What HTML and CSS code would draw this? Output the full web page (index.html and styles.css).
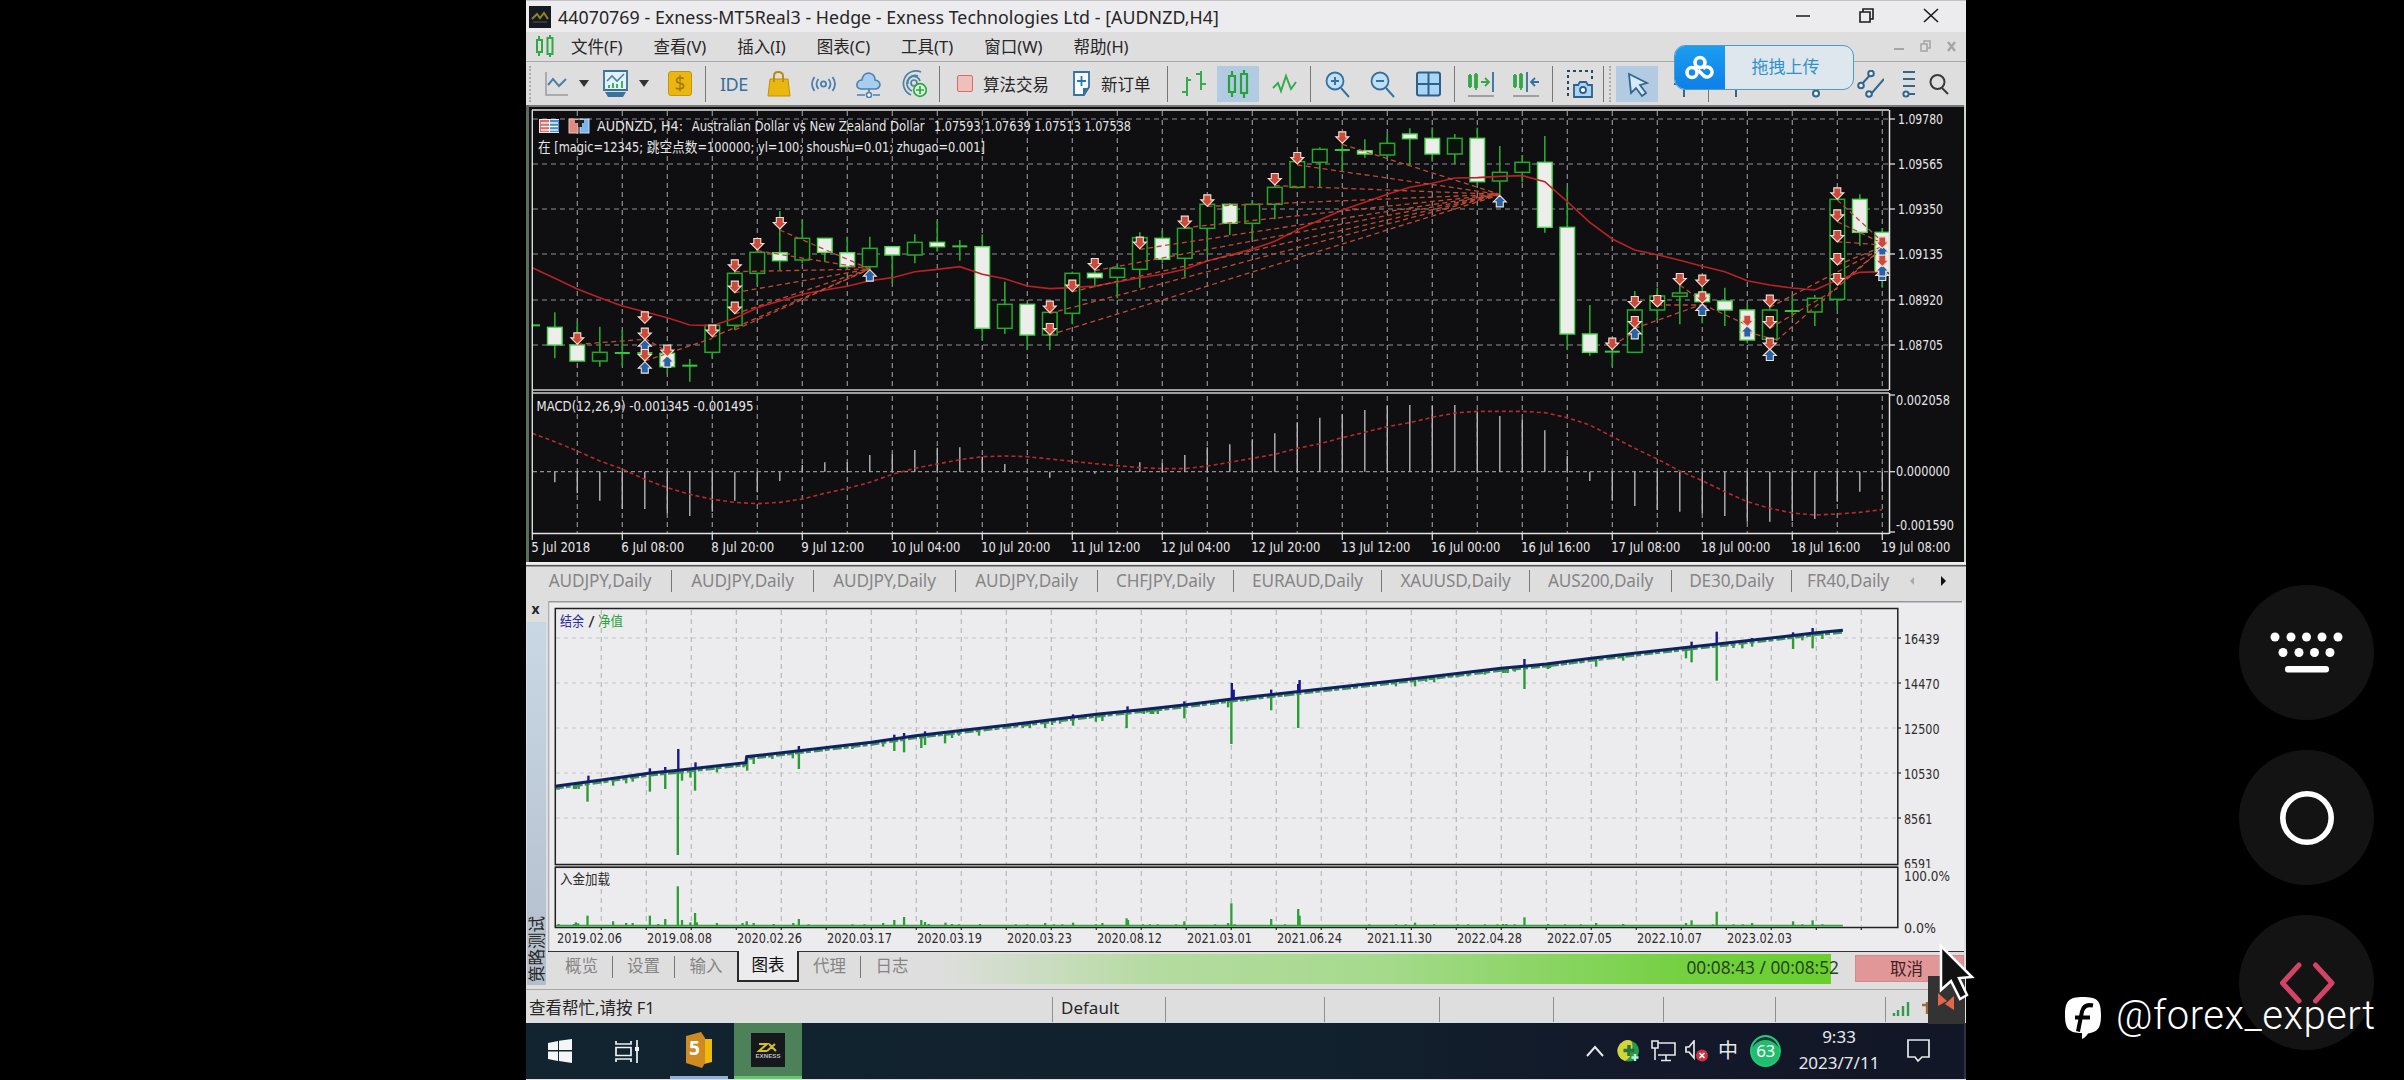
FILE: index.html
```html
<!DOCTYPE html>
<html lang="zh-CN">
<head>
    <meta charset="UTF-8">
    <meta name="viewport" content="width=device-width, initial-scale=1.0">
    <title>44070769 - Exness-MT5Real3</title>
    <link rel="stylesheet" href="styles.css">
</head>
<body>
    <div class="desktop">
        <div class="titlebar">
            <svg class="app-icon" width="22" height="22" viewBox="0 0 22 22"><rect width="22" height="22" fill="#151a22"/><path d="M3 13l5-5 3 4 4-5 4 6" fill="none" stroke="#8d8426" stroke-width="2"/><path d="M4 16h14" stroke="#555" stroke-width="1"/></svg>
            <span class="title">44070769 - Exness-MT5Real3 - Hedge - Exness Technologies Ltd - [AUDNZD,H4]</span>
            <svg class="win-btns" width="150" height="22" viewBox="1792 5 150 22" fill="none" stroke="#1c1c1c" stroke-width="1.6"><path d="M1796 15h14M1924 8l14 13M1938 8l-14 13"/><path d="M1860 11h10v10h-10zM1863 11v-3h10v10h-3"/></svg>
        </div>
        <div class="menubar">
            <svg width="20" height="24" viewBox="0 0 20 24" fill="none" stroke="#2fa845" stroke-width="2"><path d="M4 2v4M4 18v4M2 6h5v12h-5zM15 1v3M15 20v3M12.500 4h5v16h-5z"/></svg>
            <span class="m1">文件(F)</span><span>查看(V)</span><span>插入(I)</span><span>图表(C)</span><span>工具(T)</span><span>窗口(W)</span><span>帮助(H)</span>
            <svg class="mdi" width="66" height="16" viewBox="1892 38 66 16" fill="none" stroke="#a5a5a5" stroke-width="2"><path d="M1894 49h10"/><path d="M1921 44h6v7h-6zM1924 44v-3h6v7h-3" stroke-width="1.600"/><path d="M1948 42l7 9M1955 42l-7 9" stroke-width="2.400"/></svg>
        </div>
        <div class="toolbar">
            <i class="handle"></i>
            <svg viewBox="0 0 28 28"><path d="M4 2v23h22" fill="none" stroke="#9a9a9a" stroke-width="1.500"/><path d="M6 15l5-6 6 7 7-7" fill="none" stroke="#4c80a8" stroke-width="2"/></svg>
            <i class="caret"></i>
            <svg viewBox="0 0 28 28"><path d="M4 1h23v19H4z" fill="#e3f1fa" stroke="#37719c" stroke-width="1.800"/><path d="M5 22h21l-3 5H8z" fill="#37719c"/><path d="M7 11l5-5 5 5 7-7" fill="none" stroke="#4c80a8" stroke-width="1.600"/><path d="M9 18v-3M13 18v-5M17 18v-4M22 18v-7" stroke="#38a84a" stroke-width="1.800"/></svg>
            <i class="caret"></i>
            <div class="coin">$</div>
            <i class="sep"></i>
            <span class="ide">IDE</span>
            <svg viewBox="0 0 28 28"><path d="M5 9h18l2 17H3z" fill="#eab710" stroke="#c1900a" stroke-width="1"/><path d="M9 12V6q0-4 4-4 5 0 5 4v6" fill="none" stroke="#b98c12" stroke-width="2"/></svg>
            <svg viewBox="0 0 28 28" fill="none" stroke="#4a7fae" stroke-width="1.800"><circle cx="15.500" cy="14" r="2.600"/><path d="M10.500 9q-4 5 0 10M20.500 9q4 5 0 10M6.500 7q-5 7 0 14M24.500 7q5 7 0 14"/></svg>
            <svg viewBox="0 0 28 28" stroke="#4a83b3" stroke-width="1.600"><path d="M8 19Q3 18 4 14q1-4 5-4 1-7 7-7 6 1 6 7 5 1 5 5-1 4-5 4z" fill="#a9cdee"/><path d="M16 19v4M4 25h8M20 25h7" /><circle cx="16" cy="25" r="2.500" fill="#fff"/></svg>
            <svg viewBox="0 0 28 28" fill="none" stroke="#4a83a3" stroke-width="1.700"><circle cx="15" cy="13" r="3"/><path d="M19 6a8 8 0 1 0-6 15M22 2a12 12 0 1 0-10 23M9 14a6 6 0 0 1 12-3"/><circle cx="21" cy="20" r="6.300" fill="#d8f4d8" stroke="#31a547"/><path d="M21 16v8M17 20h8" stroke="#31a547"/></svg>
            <i class="sep"></i>
            <i class="stop"></i>
            <span class="tool-text">算法交易</span>
            <svg viewBox="0 0 28 28"><path d="M4 2h11l4 0v15l-5 8H4z" fill="#f4fafd" stroke="#37719c" stroke-width="1.800"/><path d="M19 18l-6 8v-8z" fill="#37719c"/><path d="M7 11h9M11.500 6v10" stroke="#2978ad" stroke-width="1.800"/></svg>
            <span class="tool-text">新订单</span>
            <i class="sep"></i>
            <svg viewBox="0 0 28 28" fill="none" stroke="#37aa4c" stroke-width="2"><path d="M7 7v19M2 22h5M7 10h4M21 1v19M16 4h5M21 14h5"/></svg>
            <div class="active"><svg viewBox="0 0 28 28" fill="none" stroke="#26a23c" stroke-width="2.200"><path d="M8 1v5M8 22v5M5 6h6v16H5zM20 0v4M20 23v5M17 4h6v19h-6z"/></svg></div>
            <svg viewBox="0 0 28 28" fill="none" stroke="#37aa4c" stroke-width="2"><path d="M2 18l5-5 3 8 5-15 5 13 5-7"/></svg>
            <i class="sep"></i>
            <svg viewBox="0 0 28 28"><circle cx="11" cy="11" r="8.500" fill="#bfe0f6" stroke="#33719f" stroke-width="1.800"/><path d="M17 18l8 9M7 11h8M11 7v8" stroke="#33719f" stroke-width="1.900"/></svg>
            <svg viewBox="0 0 28 28"><circle cx="11" cy="11" r="8.500" fill="#bfe0f6" stroke="#33719f" stroke-width="1.800"/><path d="M17 18l8 9M7 11h8" stroke="#33719f" stroke-width="1.900"/></svg>
            <svg viewBox="0 0 28 28"><rect x="3" y="2.500" width="23" height="23" rx="2" fill="#a9d4f3" stroke="#2d608b" stroke-width="2"/><path d="M14.500 3v22M3 14h23" stroke="#2d608b" stroke-width="2"/></svg>
            <i class="sep"></i>
            <svg viewBox="0 0 28 28" fill="none" stroke="#34a548" stroke-width="1.800"><path d="M4 4v14M3 6h2v10H3zM10 3v17M9 5h2v12H9zM15 12h8M19 8l4 4-4 4"/><path d="M27 2v20" stroke="#33719f"/><path d="M2 26h26" stroke="#999"/></svg>
            <svg viewBox="0 0 28 28" fill="none" stroke="#34a548" stroke-width="1.800"><path d="M4 4v14M3 6h2v10H3zM10 3v17M9 5h2v12H9z"/><path d="M16 2v20M28 12h-8M24 8l-4 4 4 4" stroke="#33719f"/><path d="M2 26h26" stroke="#999"/></svg>
            <i class="sep"></i>
            <svg viewBox="0 0 28 28"><path d="M3 26V1h24v11" fill="none" stroke="#1f4a68" stroke-width="2" stroke-dasharray="3 3"/><path d="M9 15h4l2-3h6l2 3h4v12H9z" fill="#a9d4f3" stroke="#2d608b" stroke-width="1.800"/><circle cx="18" cy="20" r="3" fill="#fff" stroke="#2d608b" stroke-width="1.800"/></svg>
            <i class="sep"></i>
            <i class="handle"></i>
            <div class="active"><svg viewBox="0 0 28 28"><path d="M6 4l2 19 5-5 6 8 4-3-6-8 7-2z" fill="#d6eafa" stroke="#33668f" stroke-width="1.800"/></svg></div>
            <svg viewBox="0 0 28 28" stroke="#33668f" stroke-width="2"><path d="M12 2v25M2 14h22"/></svg>
            <i class="sep"></i>
            <svg viewBox="0 0 28 28" stroke="#33668f" stroke-width="2"><path d="M14 2v25"/></svg>
            <svg viewBox="0 0 28 28" fill="#e8f3fb" stroke="#33668f" stroke-width="2"><path d="M14 22L26 5"/><circle cx="14" cy="23.500" r="3"/></svg>
            <svg viewBox="0 0 28 28" fill="#e8f3fb" stroke="#33668f" stroke-width="2"><path d="M5 15L15 4M15 24L28 9"/><circle cx="5" cy="15.500" r="2.800"/><circle cx="15" cy="3.500" r="2.800"/><circle cx="13" cy="24" r="2.800"/></svg>
            <svg viewBox="0 0 28 28" fill="#e8f3fb" stroke="#33668f" stroke-width="2"><path d="M3 2h12M3 9h12M3 16h12M3 24h12"/><circle cx="6" cy="24" r="2.600"/></svg>
            <svg viewBox="0 0 28 28" fill="none" stroke="#3a3a3a" stroke-width="2"><circle cx="9.500" cy="12" r="7"/><path d="M14 18l6 6"/></svg>
        </div>

        <svg id="market" class="market" viewBox="526 105 1440 457"></svg>

        <div class="chart-tabs">
            <span>AUDJPY,Daily</span><span>AUDJPY,Daily</span><span>AUDJPY,Daily</span><span>AUDJPY,Daily</span><span>CHFJPY,Daily</span><span>EURAUD,Daily</span><span>XAUUSD,Daily</span><span>AUS200,Daily</span><span>DE30,Daily</span><span>FR40,Daily</span>
            <svg class="tab-arrows" width="60" height="12" viewBox="0 0 60 12"><path d="M10 2v8L6 6z" fill="#aaa"/><path d="M37 1v10l5-5z" fill="#111"/></svg>
        </div>

        <div class="tester">
            <div class="side">
                <b>x</b>
                <div class="side-title"><span>策略测试</span></div>
            </div>
            <div class="panel">
                <svg id="balance" class="balance" viewBox="548 602 1416 350"></svg>
                <div class="tester-tabs">
                    <span>概览</span><span>设置</span><span class="nosep">输入</span><span class="on">图表</span><span>代理</span><span class="nosep">日志</span>
                    <div class="progress"><div class="bar"></div><span>00:08:43 / 00:08:52</span></div>
                    <button class="cancel">取消</button>
                </div>
            </div>
        </div>

        <div class="status">
            <span>查看帮忙,请按 F1</span><span>Default</span><span></span><span></span><span></span><span></span><span></span><span></span>
            <svg width="40" height="18" viewBox="0 0 40 18" stroke="#2f9c4b" stroke-width="2.400"><path d="M4 16v-3M8 16V10M13 16V6M18 16V2"/><path d="M32 5h6M37 2v12" stroke="#9b6b3c"/></svg>
        </div>

        <div class="taskbar">
            <svg class="start" width="24" height="24" viewBox="0 0 24 24" fill="#f4f6f8"><path d="M0 4l10-2v9H0zM11 1.800L24 0v11H11zM0 12.500h10V22L0 20zM11 12.500h13V24l-13-2z"/></svg>
            <svg class="view" width="26" height="24" viewBox="0 0 26 24" fill="none" stroke="#f0f2f4" stroke-width="1.700"><path d="M1 2v3h15V2M1 8.500h15v8H1zM1 23v-3h15v3M22 1v23"/><path d="M20 10h4" stroke-width="4"/></svg>
            <div class="app mt"><svg width="28" height="36" viewBox="0 0 28 36"><path d="M11 7h16v23l-12 3z" fill="#f0b90f"/><path d="M1 4l15-4 4 6v25l-3 5L1 31z" fill="#cd8b22"/><text x="4" y="23" class="five">5</text></svg></div>
            <div class="app ex"><svg width="34" height="34" viewBox="0 0 34 34"><rect width="34" height="34" fill="#16191c"/><path d="M8 11h8l-8 7h8M16 18l8-7M18 11l7 7" fill="none" stroke="#d4bc2f" stroke-width="2"/><text x="4.500" y="25" textLength="25" lengthAdjust="spacingAndGlyphs" class="exn">EXNESS</text></svg></div>
            <div class="tray">
                <svg width="18" height="12" viewBox="0 0 18 12" fill="none" stroke="#e6e8ea" stroke-width="2"><path d="M1 11l8-9 8 9"/></svg>
                <svg class="t2" width="24" height="24" viewBox="0 0 24 24"><circle cx="11.500" cy="12" r="10.500" fill="#2a9a4c"/><path d="M14 1.500A10.500 10.500 0 1 0 8 22q7-4 6-10 3-5 0-10.500z" fill="#d2d43a"/><path d="M12 6v11M6.500 11.500h11" stroke="#25753a" stroke-width="3.500"/><path d="M18 15v7M14.500 18.500h7" stroke="#b9f1dd" stroke-width="2.500"/></svg>
                <svg class="t3" width="25" height="22" viewBox="0 0 25 22" fill="none" stroke="#e6e8ea" stroke-width="1.600"><path d="M7 3h17v12H7M15 15v5M10 20.500h10M1 1h6v7H1zM4 8v12"/></svg>
                <svg class="t4" width="24" height="22" viewBox="0 0 24 22"><path d="M1 7h3l5-6v17l-5-6H1z" fill="none" stroke="#e6e8ea" stroke-width="1.700"/><circle cx="17" cy="15.500" r="6" fill="#cc3340"/><path d="M14.500 13l5 5M19.500 13l-5 5" stroke="#fff" stroke-width="1.700"/></svg>
                <span class="ime">中</span>
                <span class="badge">63</span>
                <div class="clock"><div>9:33</div><div>2023/7/11</div></div>
                <svg class="note" width="24" height="24" viewBox="0 0 24 24" fill="none" stroke="#e6e8ea" stroke-width="1.700"><path d="M1 1h21v17h-7l-4 4-3-4H1z"/></svg>
            </div>
        </div>

        <!-- 悬浮元素 -->
        <div class="upload">
            <div class="cloud"><svg width="32" height="26" viewBox="0 0 32 26" fill="none" stroke="#fff" stroke-width="3.600"><circle cx="16" cy="7.500" r="5"/><circle cx="8" cy="17.500" r="5"/><path d="M19 14a5 5 0 1 1 1 7l-6-6"/></svg></div>
            <span>拖拽上传</span>
        </div>
        <div class="popup"><svg width="18" height="20" viewBox="0 0 18 20" fill="#e0684b"><path d="M1 2l9 8-9 5zM17 5v14l-9-6z"/></svg></div>
        <svg class="pointer" width="38" height="58" viewBox="0 0 38 58"><path d="M2 3v44l10-9 9 18 7-4-8-17 13-1z" fill="#111" stroke="#fff" stroke-width="2.500"/></svg>
    </div>

    <div class="float-btns">
        <div class="round"><svg width="74" height="44" viewBox="0 0 74 44" fill="#fff"><circle cx="5" cy="6" r="4.500"/><circle cx="21" cy="6" r="4.500"/><circle cx="36.500" cy="6" r="4.500"/><circle cx="52" cy="6" r="4.500"/><circle cx="68" cy="6" r="4.500"/><circle cx="13" cy="21.500" r="4.500"/><circle cx="29" cy="21.500" r="4.500"/><circle cx="44.500" cy="21.500" r="4.500"/><circle cx="60" cy="21.500" r="4.500"/><rect x="15" y="35" width="44" height="6.500" rx="3"/></svg></div>
        <div class="round"><svg width="56" height="56" viewBox="0 0 56 56"><circle cx="28" cy="28" r="24.200" fill="none" stroke="#fff" stroke-width="5.600"/></svg></div>
        <div class="round"><svg width="56" height="44" viewBox="0 0 56 44" fill="none" stroke="#d24466" stroke-width="5" stroke-linecap="round" stroke-linejoin="round"><path d="M20 4L3.500 22 20 40M36.500 4L53 22 36.500 40"/></svg></div>
    </div>

    <div class="watermark">
        <svg width="38" height="44" viewBox="0 0 38 44"><path d="M19 1C33 1 37 4 37 19c0 13-3 17-13 18.500-2 3-3 4-6 5.500v-6C5 37 1 33 1 19 1 5 5 1 19 1z" fill="#fff"/><path d="M29 9.500q-9-2-11 6l-4 20M11 21.500h15" fill="none" stroke="#000" stroke-width="4"/></svg>
        <span>@forex_expert</span>
    </div>

    <script src="script.js"></script>
</body>
</html>
```

FILE: styles.css
```css
*{margin: 0;padding: 0;box-sizing: border-box;}
body{
    width: 2404px;
    height: 1080px;
    overflow: hidden;
    background: #000;
    display: flex;
    position: relative;
    font-family: "Noto Sans","Noto Sans CJK SC",sans-serif;
}
svg{display: block;flex: none;}
.desktop{
    width: 1440px;
    height: 1080px;
    margin-left: 526px;
    background: #dfdedf;
    display: flex;
    flex-direction: column;
    position: relative;
    color: #262626;
}
.titlebar{
    height: 32px;
    background: #ecebed;
    border-top: 1px solid #c3c2c4;
    display: flex;
    align-items: center;
    padding-left: 3px;
}
.title{font-size: 17.8px;margin-left: 7px;white-space: nowrap;letter-spacing: 0.05px;}
.win-btns{margin-left: auto;margin-right: 24px;}
.menubar{
    height: 30px;
    border-bottom: 1px solid #a9a8aa;
    display: flex;
    align-items: center;
    gap: 31px;
    padding: 0 0 2px 9px;
    font-size: 16.5px;
}
.menubar .m1{margin-left: -15px;}
.mdi{margin-left: auto;margin-right: 8px;}

/* 工具栏 */
.toolbar{
    height: 43px;
    display: grid;
    align-items: center;
    grid-template-columns: 16px 34px 24px 36px 29px 39px 12px 49px 43px 45px 46px 39px 17px 28px 87px 31px 65px 14px 37px 54px 38px 15px 45px 45px 39px 13px 45px 40px 14px 37px 4px 10px 56px 35px 15px 80px 54px 44px 28px 38px;
}
.toolbar svg{width: 28px;height: 28px;}
.handle{width: 0;height: 36px;margin-left: 3px;border-left: 2px dotted #aaa;}
.sep{width: 1px;height: 36px;background: #777;margin-left: 1px;}
.caret{margin-left: 3px;border: 5px solid transparent;border-top: 7px solid #333;border-bottom: 0;width: 10px;}
.coin{
    width: 24px;height: 25px;margin-left: 3px;
    background: #eab710;border: 1px solid #c49410;border-radius: 3px;
    color: #a4780b;font-size: 19px;line-height: 22px;text-align: center;
}
.ide{font-size: 18px;color: #356f9d;margin-left: 4px;letter-spacing: -0.5px;}
.stop{width: 16px;height: 17px;margin-left: 2px;background: #efc0ba;border: 1.5px solid #d56d66;border-radius: 2px;}
.tool-text{font-size: 16.5px;white-space: nowrap;}
.active{width: 42px;height: 36px;background: #b2cbe2;display: flex;align-items: center;justify-content: center;}

.market{width: 1440px;height: 457px;background: #0f0f12;}
.market text{fill: #e6e6e6;font-family: "DejaVu Sans Condensed","DejaVu Sans","Noto Sans CJK SC",sans-serif;font-size: 13.5px;}

/* 图表标签 */
.chart-tabs{
    height: 38px;
    padding: 4px 0 7px 3px;
    border-top: 2px solid #efefef;
    background: linear-gradient(#555,#555) 0 1px/100% 1.5px no-repeat,#dfdedf;
    display: grid;
    grid-template-columns: 143px 142px 142px 142px 136px 148px 148px 142px 120px 112px 60px;
    align-items: center;
    font-size: 17.2px;
    color: #868686;
    letter-spacing: -0.15px;
}
.chart-tabs span{border-right: 1px solid #777;text-align: center;height: 22px;line-height: 21px;}
.chart-tabs span:nth-child(10){border: 0;}

/* 策略测试 */
.tester{height: 390px;display: flex;border-bottom: 1px solid #a8a8a8;}
.side{width: 22px;display: flex;flex-direction: column;}
.side b{height: 22px;text-align: center;font-size: 14px;line-height: 17px;width: 19px;}
.side-title{
    width: 19px;
    margin-left: 1px;
    height: 363px;
    background: linear-gradient(#c9d7e5,#b3becb);
    display: flex;
    align-items: flex-end;
    padding-bottom: 3px;
}
.side-title span{writing-mode: vertical-rl;transform: rotate(180deg);font-size: 16.5px;line-height: 19px;text-orientation: sideways;white-space: nowrap;}
.panel{flex: 1;padding-top: 1px;}
.balance{width: 1416px;height: 350px;background: #ecebed;}
.balance text{font-family: "DejaVu Sans Condensed","DejaVu Sans","Noto Sans CJK SC",sans-serif;font-size: 13.5px;fill: #2c2c2c;}
.tester-tabs{
    height: 34px;
    display: flex;
    font-size: 16.5px;
    color: #858585;
    border-top: 1px solid #333;
    padding-left: 3px;
    width: 1416px;
}
.tester-tabs > span{width: 62px;height: 22px;margin-top: 4px;line-height: 20px;text-align: center;border-right: 1px solid #777;}
.tester-tabs > .nosep{border: 0;}
.tester-tabs > .on{
    width: 62px;
    height: 31px;
    margin-top: -1px;
    line-height: 28px;
    background: #ecebed;
    border: 2px solid #2b2b2b;
    border-top: 0;
    color: #111;
}
.progress{
    width: 912px;
    height: 30px;
    margin: 2px 0 0 11px;
    display: flex;
    align-items: center;
    justify-content: flex-end;
    position: relative;
    font-size: 17.3px;
    color: #28451e;
}
.progress .bar{position: absolute;left: 0;top: 0;width: 897px;height: 30px;background: linear-gradient(90deg,#dfdedf,#b4dba0 25%,#a5da8c 50%,#72d03e 85%,#68cf2d);}
.progress span{position: relative;margin: -3px 7px 0 0;white-space: nowrap;}
.cancel{
    width: 109px;
    height: 27px;
    margin: 3px 0 0 9px;
    border: 1px solid #ce8a8c;
    background: #e19698;
    font: inherit;
    color: #3c2222;
    text-align: left;
    padding-left: 34px;
    line-height: 24px;
}

.status{
    height: 33px;
    display: grid;
    grid-template-columns: 527px 113px 159px 115px 114px 110px 112px 110px 1fr;
    align-items: center;
    font-size: 16.5px;
    padding-top: 5px;
}
.status span{height: 25px;line-height: 22px;border-right: 1px solid #8f8f8f;padding-left: 3px;white-space: nowrap;}
.status span:nth-child(2){padding-left: 8px;font-size: 17px;}
.status svg{margin-left: 4px;}

/* 任务栏 */
.taskbar{
    height: 56px;
    background: linear-gradient(90deg,#11242f,#11212d 55%,#13182a 80%,#121727);
    display: flex;
    align-items: center;
    border-right: 2px solid #2b3446;
}
.start{margin-left: 22px;}
.view{margin-left: 43px;}
.app{height: 56px;display: flex;align-items: center;justify-content: center;}
.mt{width: 58px;margin-left: 29px;border-bottom: 3px solid #8ab2dc;}
.ex{width: 68px;margin-left: 6px;background: #4c815a;border-bottom: 3px solid #5bcb68;}
.five{font: bold 19px "Noto Sans",sans-serif;fill: #fff;}
.exn{font: bold 6px "Liberation Sans",sans-serif;fill: #bbb;}
.tray{margin-left: auto;display: flex;align-items: center;color: #e6e8ea;}
.t2{margin-left: 13px;}
.t3{margin-left: 10px;}
.t4{margin-left: 9px;}
.ime{font-size: 20px;margin-left: 9px;line-height: 24px;}
.badge{
    width: 31px;
    height: 32px;
    border-radius: 50%;
    margin-left: 12px;
    background: #1fbd6c;
    border: 2px solid #23c877;
    box-shadow: inset 0 5px 0 -2px #15353a;
    color: #fff;
    font-size: 17px;
    line-height: 28px;
    text-align: center;
    letter-spacing: -0.5px;
}
.clock{width: 100px;margin-left: 8px;text-align: center;font-size: 17px;line-height: 26px;padding-bottom: 2px;}
.note{margin-left: 18px;margin-right: 33px;}

.upload{
    position: absolute;
    left: 1148px;
    top: 45px;
    width: 180px;
    height: 45px;
    border: 1.5px solid #4a9ccd;
    border-radius: 11px;
    background: #dfe7ee;
    display: flex;
    overflow: hidden;
    color: #2f92cb;
    font-size: 17px;
}
.cloud{width: 50px;background: linear-gradient(#1c9ef0,#0d7fe9);display: flex;align-items: center;justify-content: center;}
.upload span{flex: 1;text-align: center;line-height: 41px;padding-right: 7px;}
.popup{position: absolute;left: 1402px;top: 976px;width: 37px;height: 48px;background: #333;padding: 15px 0 0 9px;}
.pointer{position: absolute;left: 1413px;top: 943px;}

.float-btns{margin-left: 273px;padding-top: 585px;display: flex;flex-direction: column;gap: 30px;}
.round{width: 135px;height: 135px;border-radius: 50%;background: #131313;display: flex;align-items: center;justify-content: center;flex: none;}
.watermark{
    position: absolute;
    left: 2064px;
    top: 990px;
    height: 56px;
    display: flex;
    align-items: center;
    gap: 14px;
    color: #fff;
    font: 300 40px/50px "Roboto",sans-serif;
    letter-spacing: 0.5px;
}
.watermark span{margin-top: -4px;}
```

FILE: script.js
```js
const market = document.querySelector('#market')
const balance = document.querySelector('#balance')

const line = (x1, y1, x2, y2, color, w = 1.3, dash = '') =>
    `<line x1="${x1}" y1="${y1}" x2="${x2}" y2="${y2}" stroke="${color}" stroke-width="${w}" stroke-dasharray="${dash}"/>`
const rect = (x, y, w, h, fill, stroke = 'none', sw = 1.5) =>
    `<rect x="${x}" y="${y}" width="${w}" height="${h}" fill="${fill}" stroke="${stroke}" stroke-width="${sw}"/>`
const text = (x, y, len, s, extra = '') =>
    `<text x="${x}" y="${y}" textLength="${len}" lengthAdjust="spacingAndGlyphs" ${extra}>${s}</text>`

const cx = i => 532.3 + 22.5 * i
const py = v => 105 + v / 3
const my = v => 385 + v / 3

// 每根K线: 类型(w实心 h空心 d十字), 高, 实体上, 实体下, 低
const candles = [
    'd 659 661 661 664', 'w 622 667 720 760', 'w 650 720 768 768', 'h 665 742 768 785', 'd 675 744 744 782',
    'd 700 744 744 770', 'w 735 745 785 805', 'd 762 782 782 830', 'h 661 661 742 760', 'h 495 505 661 675',
    'h 430 442 505 540', 'w 318 443 467 495', 'h 345 400 465 475', 'w 400 400 442 470', 'w 395 443 485 490',
    'h 395 430 485 500', 'w 425 425 450 535', 'h 388 412 450 475', 'w 348 412 425 440', 'd 405 424 424 467',
    'w 388 425 670 705', 'h 530 598 670 687', 'w 598 598 690 735', 'h 615 622 690 735', 'h 500 505 625 658',
    'w 490 505 518 547', 'h 475 490 517 580', 'h 382 398 493 548', 'w 378 400 463 475', 'h 365 370 460 515',
    'h 295 298 370 450', 'w 295 298 355 390', 'h 285 298 355 403', 'h 240 247 298 343', 'h 165 170 247 250',
    'h 127 133 172 247', 'd 110 135 135 200', 'w 103 137 147 158', 'h 87 115 150 160', 'w 70 87 101 180',
    'w 67 100 147 170', 'h 87 100 147 177', 'w 68 100 230 240', 'h 123 202 228 270', 'h 150 172 202 232',
    'w 93 172 367 383', 'w 247 367 687 735', 'w 600 687 742 752', 'd 700 740 740 783', 'h 558 615 742 742',
    'h 548 573 615 645', 'h 535 564 574 658', 'w 530 567 590 655', 'w 548 588 615 663', 'w 598 615 705 715',
    'h 600 615 703 740', 'd 570 618 618 637', 'h 570 580 621 663', 'h 245 283 583 615', 'w 268 283 382 422', 'w 370 382 500 548'
]
const ma = [488, 520, 552, 578, 603, 620, 638, 660, 662, 640, 608, 588, 568, 555, 544, 527, 518, 500, 493, 485, 508, 521, 543, 551, 548, 543, 531, 518, 508, 493, 468, 450, 432, 409, 375, 345, 315, 292, 268, 247, 235, 219, 218, 214, 212, 230, 290, 352, 402, 435, 449, 466, 484, 500, 527, 540, 549, 555, 525, 502, 500]
const sells = [[2, 700], [5, 637], [5, 686], [5, 750], [6, 737], [8, 677], [9, 481], [9, 545], [9, 608], [10, 417], [11, 354], [23, 605], [23, 672], [24, 542], [25, 477], [27, 413], [29, 350], [30, 286], [33, 222], [34, 159], [36, 97], [48, 716], [49, 591], [49, 651], [50, 588], [51, 522], [52, 527], [52, 577], [54, 647], [55, 587], [55, 651], [55, 716], [58, 265], [58, 331], [58, 393], [58, 462], [58, 522], [60, 412], [60, 467]]
const buys = [[5, 722], [5, 788], [6, 770], [15, 512], [43, 289], [49, 685], [52, 615], [54, 680], [55, 750], [60, 440], [60, 510], [60, 497]]
const deals = [
    [2, 718, 5, 703], [5, 700, 6, 740], [5, 768, 8, 700], [8, 697, 15, 492], [9, 500, 15, 492], [9, 563, 15, 492], [9, 627, 15, 492], [9, 675, 15, 492], [10, 437, 15, 492], [11, 375, 15, 492],
    [23, 625, 43, 268], [23, 690, 43, 270], [24, 560, 43, 268], [25, 497, 43, 268], [27, 433, 43, 268], [29, 368, 43, 268], [30, 304, 43, 268], [33, 242, 43, 268], [34, 180, 43, 268], [36, 118, 43, 268],
    [48, 722, 49, 680], [49, 670, 52, 598], [50, 600, 52, 600], [51, 540, 52, 590], [52, 598, 54, 660], [54, 680, 55, 700], [55, 607, 60, 430], [55, 670, 58, 550], [55, 724, 60, 430],
    [58, 285, 60, 410], [58, 350, 60, 415], [58, 410, 60, 420], [58, 480, 60, 425], [58, 542, 60, 430]
]
const hist = [260, 292, 325, 347, 372, 372, 385, 393, 380, 347, 322, 288, 240, 232, 232, 210, 208, 195, 188, 187, 215, 237, 260, 278, 260, 266, 255, 232, 235, 210, 187, 178, 163, 145, 112, 98, 88, 75, 62, 60, 62, 60, 78, 93, 103, 136, 213, 288, 347, 363, 375, 380, 385, 393, 410, 410, 408, 402, 350, 320, 320]
const signal = [145, 170, 198, 228, 252, 283, 308, 328, 343, 352, 356, 352, 342, 325, 310, 292, 268, 250, 237, 224, 215, 213, 215, 222, 229, 236, 242, 248, 251, 251, 243, 232, 220, 208, 190, 176, 158, 142, 125, 113, 97, 84, 79, 79, 79, 83, 98, 120, 155, 190, 222, 258, 287, 320, 350, 370, 384, 390, 387, 382, 374]

function arrow(x, y, up) {
    let d = up ? 'M0-6L6.500.5H3.500V5.500H-3.500V.5H-6.500z' : 'M0 6L6.500-.5H3.500V-5.500H-3.500V-.5H-6.500z'
    return `<path transform="translate(${x} ${y})" d="${d}" fill="${up ? '#2463a8' : '#cb4a3a'}" stroke="#f3dfd8" stroke-width="1.100"/>`
}

function drawMarket() {
    let s = rect(526, 105, 1440, 2, '#777') + rect(526, 105, 3, 457, '#5d6b5f') + rect(1964, 105, 2, 457, '#c4d9c5')
    // 网格
    for (let i = 2; i <= 60; i += 2) {
        s += line(cx(i), 111, cx(i), 389, '#8f8f94', 1.2, '5 4')
        s += line(cx(i), 396, cx(i), 533, '#8f8f94', 1.2, '5 4')
    }
    const prices = [[119, '1.09780'], [164, '1.09565'], [209, '1.09350'], [254, '1.09135'], [300, '1.08920'], [345, '1.08705']]
    prices.forEach(([y, p]) => {
        s += line(533, y, 1889, y, '#8f8f94', 1.2, '5 4') + line(1889, y, 1895, y, '#ddd')
        s += text(1898, y + 4.7, 45, p)
    })
    s += line(533, 471.7, 1889, 471.7, '#8f8f94', 1.2, '4 3')
    candles.forEach((c, i) => {
        let [t, ...v] = c.split(' ')
        let [h, a, b, l] = v.map(n => py(+n))
        let x = cx(i), g = '#27a82d'
        if (t === 'h') s += line(x, h, x, a, g, 1.6) + line(x, b, x, l, g, 1.6) + rect(x - 7.3, a, 14.6, b - a, '#0a120c', g)
        else s += line(x, h, x, l, g, 1.6)
        if (t === 'w') s += rect(x - 7.3, a, 14.6, b - a, '#ededeb', '#50d954', 1.4)
        if (t === 'd') s += rect(Math.max(x - 7.500, 532), a - 1, x < 540 ? 8 : 15, 2, '#36c53c')
    })
    const path = (arr, f) => arr.map((v, i) => `${cx(i)},${f(v)}`).join(' ')
    s += `<polyline points="${path(ma, py)}" fill="none" stroke="#b92124" stroke-width="1.600"/>`
    deals.forEach(d => { s += line(cx(d[0]), py(d[1]), cx(d[2]), py(d[3]), '#bf4a32', 1.3, '5 3.5') })
    buys.forEach(a => { s += arrow(cx(a[0]), py(a[1]), true) })
    sells.forEach(a => { s += arrow(cx(a[0]), py(a[1]), false) })
    // 右侧最后一根被边框截断
    s += rect(1890, 225, 8, 65, '#0f0f12')
    s += line(1889, 254, 1895, 254, '#ddd')
    hist.forEach((v, i) => { if (v !== 260) s += line(cx(i), 471.7, cx(i), my(v), '#b5b5b8', 1.4) })
    s += `<polyline points="${path(signal, my)}" fill="none" stroke="#b82a2a" stroke-width="1.600" stroke-dasharray="4 3"/>`
    // 边框
    s += line(532, 110, 1889, 110, '#e2e2e2', 1.5) + line(532.3, 110, 532.3, 534, '#d6ddd6', 1.4) + line(532, 390, 1889, 390, '#cfcfcf', 1.5)
    s += line(532, 393, 1889, 393, '#cfcfcf', 1.5) + line(532, 533.5, 1889, 533.5, '#e2e2e2', 1.5) + line(1889.5, 110, 1889.5, 390, '#e2e2e2', 1.5) + line(1889.5, 393, 1889.5, 534, '#e2e2e2', 1.5)
    s += line(1889, 395, 1895, 395, '#ddd') + line(1889, 471.7, 1895, 471.7, '#ddd') + line(1889, 532, 1895, 532, '#ddd')
    s += text(1896, 404.5, 54, '0.002058') + text(1896, 475.5, 54, '0.000000') + text(1896, 530, 58, '-0.001590')
    const dates = ['5 Jul 2018', '6 Jul 08:00', '8 Jul 20:00', '9 Jul 12:00', '10 Jul 04:00', '10 Jul 20:00', '11 Jul 12:00', '12 Jul 04:00', '12 Jul 20:00', '13 Jul 12:00', '16 Jul 00:00', '16 Jul 16:00', '17 Jul 08:00', '18 Jul 00:00', '18 Jul 16:00', '19 Jul 08:00']
    dates.forEach((d, i) => {
        s += line(cx(i * 4), 534, cx(i * 4), 540, '#ddd')
        s += text(cx(i * 4) - 1, 551.5, i === 0 ? 59 : d.length === 11 ? 63 : 69, d)
    })
    // 标题
    s += rect(539, 119, 20, 14, '#e8e8ee') + rect(540, 120, 9, 12, '#d7706a') + rect(550, 120, 9, 12, '#4a8fd0')
    s += line(541, 123, 558, 123, '#fff') + line(541, 126.5, 558, 126.5, '#fff') + line(541, 130, 558, 130, '#fff')
    s += rect(569, 119, 9, 14, '#e08a80', '#e9c4bd', 1) + rect(580, 119, 9, 14, '#7fb4e8', '#c7def3', 1) + rect(575, 120, 9, 3, '#222') + rect(578, 122, 4, 5, '#222')
    s += text(597, 130.8, 86, 'AUDNZD, H4:') + text(691.7, 130.8, 233, 'Australian Dollar vs New Zealand Dollar') + text(934, 130.8, 197, '1.07593 1.07639 1.07513 1.07538')
    s += text(538, 151.8, 447, '在 [magic=12345; 跳空点数=100000; yl=100; shoushu=0.01; zhugao=0.001]')
    s += text(536.5, 410.5, 217, 'MACD(12,26,9) -0.001345 -0.001495')
    market.innerHTML = s
}

// 左半段和右半段的横坐标
const L = v => 520 + v / 2.148
const R = v => 1240 + v / 2.148
const by = v => 600 + v / 3
const curve = [[L, 75, 562], [L, 175, 543], [L, 280, 522], [L, 340, 514], [L, 485, 491], [L, 487, 473], [L, 600, 455], [L, 755, 430], [L, 850, 410], [L, 1045, 379], [L, 1141, 362], [L, 1238, 346], [L, 1335, 332], [L, 1431, 317], [R, 0, 297], [R, 175, 270], [R, 367, 240], [R, 561, 208], [R, 658, 195], [R, 755, 178], [R, 851, 162], [R, 948, 147], [R, 1045, 132], [R, 1141, 117], [R, 1238, 101], [R, 1295, 94]].map(([f, x, y]) => [f(x), by(y)])
const pairs = (f, s) => s.split(' ').map(p => p.split(',').map(Number)).map(([x, y]) => [f(x), y])
const drops = [
    ...pairs(L, '83,572 116,570 120,570 126,570 145,608 200,560 228,553 242,548 279,578 312,570 339,768 348,545 366,536 376,575 423,520 480,505 488,515 502,495 542,480 586,478 599,510 620,460 714,450 780,443 804,456 825,460 862,447 870,438 913,433 928,417 943,410 986,410 1080,387 1095,387 1128,387 1143,378 1160,374 1188,380 1237,368 1251,366 1303,387 1340,345 1355,345 1360,345 1370,345 1427,358 1490,318 1521,325 1528,435'),
    ...pairs(R, '15,307 67,334 97,293 125,387 245,267 335,262 376,262 400,248 417,250 456,235 468,235 490,232 526,227 565,222 570,222 575,222 590,218 611,270 662,210 666,207 700,198 732,193 765,203 823,185 958,178 970,190 1024,245 1060,147 1079,148 1100,143 1188,150 1208,124 1230,148 1251,120')
]
const ups = [
    ...pairs(L, '147,530 279,508 312,504 340,450 377,490 599,441 804,407 825,402 870,397 1188,346 1305,322 1427,307 1529,252 1533,272'),
    ...pairs(R, '67,272 125,255 128,243 611,180 970,128 1024,98 1100,117 1188,100 1230,87')
]
const load = [
    ...pairs(L, '83,195 116,195 120,190 125,193 145,170 200,187 228,192 242,192 279,170 297,195 312,180 339,82 348,183 366,190 376,162 380,190 423,192 478,192 487,187 502,192 545,195 587,192 599,180 620,196 714,196 740,196 780,192 804,183 825,174 862,183 870,189 878,195 914,191 928,195 943,196 988,195 1065,196 1090,196 1128,192 1147,196 1165,196 1188,191 1237,196 1251,192 1303,178 1306,183 1338,196 1353,196 1370,196 1409,196 1427,187 1493,196 1521,192 1528,133 1535,196'),
    ...pairs(R, '67,180 97,196 125,150 128,170 278,196 335,196 356,196 376,191 417,196 468,196 490,196 526,196 553,196 565,195 572,195 590,196 611,175 662,195 698,196 732,196 765,192 823,195 958,192 970,184 1016,196 1024,158 1060,196 1080,196 1100,192 1188,187 1208,196 1230,184 1251,196')
]

function balanceAt(x) {
    for (let i = 1; i < curve.length; i++) {
        if (x <= curve[i][0]) {
            let [x0, y0] = curve[i - 1], [x1, y1] = curve[i]
            return y0 + (y1 - y0) * (x - x0) / (x1 - x0)
        }
    }
    return curve[curve.length - 1][1]
}

function drawBalance() {
    let s = line(548, 602.7, 1962, 602.7, '#999', 1.4) + line(548.7, 602, 548.7, 952, '#aaa', 1.2)
    for (let n = 0; n < 29; n++) {
        let x = 601.3 + 45 * n
        s += line(x, 611, x, 865, '#b9b8ba', 1.2, '5 4') + line(x, 872, x, 927, '#b9b8ba', 1.2, '5 4') + line(x, 928, x, 931, '#333')
    }
    const rows = [[639, '16439'], [684, '14470'], [729, '12500'], [774, '10530'], [819, '8561']]
    rows.forEach(([y, v]) => {
        s += line(556, y, 1898, y, '#c4c3c5', 1.2, '4 4') + line(1898, y, 1901, y, '#333')
        s += text(1904, y + 6, v.length * 7.1, v)
    })
    s += `<svg x="1900" y="860" width="60" height="9" viewBox="1900 860 60 9">${text(1904, 870, 28, '6591')}</svg>`
    drops.forEach(([x, y]) => { s += line(x, balanceAt(x), x, by(y), '#2a9c34', 2.4) })
    s += `<polyline points="${curve.map(([x, y]) => `${x},${y + 2.2}`).join(' ')}" fill="none" stroke="#3f8f62" stroke-width="2.500" stroke-dasharray="9 2 5 3"/>`
    s += `<polyline points="${curve.map(p => p.join()).join(' ')}" fill="none" stroke="#10225e" stroke-width="3"/>`
    ups.forEach(([x, y]) => { s += line(x, balanceAt(x), x, by(y), '#18188c', 2.4) })
    s += rect(555.3, 609.5, 1342.5, 256, 'none', '#222') + rect(555, 866.3, 1343, 1.700, '#999') + rect(555.3, 868.3, 1342.5, 60.2, 'none', '#222')
    s += line(556, 926.7, R(1295), 926.7, '#35a340', 1.8)
    load.forEach(([x, y]) => { s += line(x, 927, x, 860 + y / 3, '#2ba035', 2.3) })
    s += text(560, 626.5, 24, '结余', 'style="fill:#2b2b9a"') + text(588.5, 626.5, 6, '/') + text(598, 626.5, 25, '净值', 'style="fill:#2da23c"')
    s += text(560, 885, 50, '入金加载') + text(1904, 881.5, 46, '100.0%') + text(1904, 933.5, 32, '0.0%')
    const dates = ['2019.02.06', '2019.08.08', '2020.02.26', '2020.03.17', '2020.03.19', '2020.03.23', '2020.08.12', '2021.03.01', '2021.06.24', '2021.11.30', '2022.04.28', '2022.07.05', '2022.10.07', '2023.02.03']
    dates.forEach((d, i) => { s += text(557 + 90 * i, 943.5, 65, d) })
    balance.innerHTML = s
}

drawMarket()
drawBalance()
```
